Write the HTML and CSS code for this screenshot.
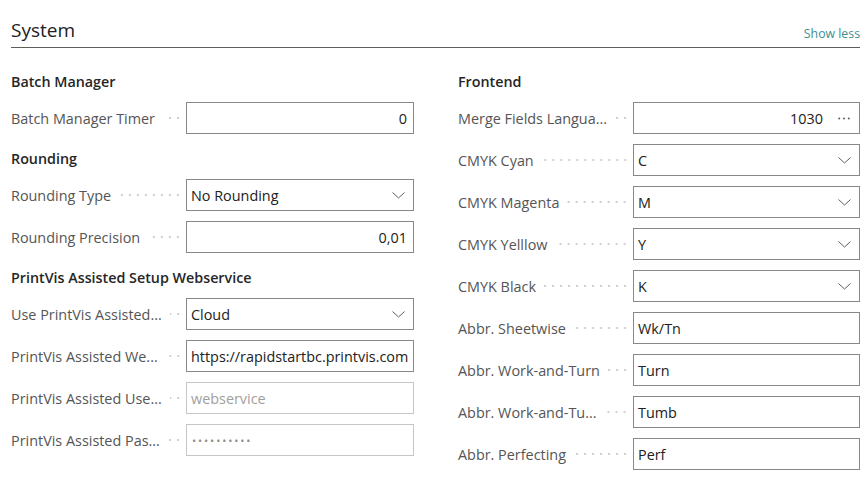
FILE: index.html
```html
<!DOCTYPE html>
<html lang="en">
<head>
<meta charset="utf-8">
<title>System</title>
<link rel="stylesheet" href="styles.css">
</head>
<body>
<div class="page">
  <div class="header">
    <h1 class="title">System</h1>
    <a class="show-less" href="#">Show less</a>
  </div>
  <div class="columns">
    <div class="col">
      <div class="group-title first">Batch Manager</div>
      <div class="field"><span class="label">Batch Manager Timer</span><span class="leader"></span><div class="box num"><span class="val">0</span></div></div>

      <div class="group-title">Rounding</div>
      <div class="field"><span class="label">Rounding Type</span><span class="leader"></span><div class="box select"><span class="val">No Rounding</span><svg class="chev" width="13" height="7" viewBox="0 0 13 7"><polyline points="0.5,0.5 6.5,6 12.5,0.5" fill="none" stroke="#605e5c" stroke-width="1"/></svg></div></div>
      <div class="field"><span class="label">Rounding Precision</span><span class="leader"></span><div class="box num"><span class="val">0,01</span></div></div>

      <div class="group-title">PrintVis Assisted Setup Webservice</div>
      <div class="field"><span class="label">Use PrintVis Assisted...</span><span class="leader"></span><div class="box select"><span class="val">Cloud</span><svg class="chev" width="13" height="7" viewBox="0 0 13 7"><polyline points="0.5,0.5 6.5,6 12.5,0.5" fill="none" stroke="#605e5c" stroke-width="1"/></svg></div></div>
      <div class="field"><span class="label">PrintVis Assisted We...</span><span class="leader"></span><div class="box"><span class="val">https://rapidstartbc.printvis.com</span></div></div>
      <div class="field"><span class="label">PrintVis Assisted Use...</span><span class="leader"></span><div class="box disabled"><span class="val">webservice</span></div></div>
      <div class="field"><span class="label">PrintVis Assisted Pas...</span><span class="leader"></span><div class="box disabled"><span class="val pw">••••••••••</span></div></div>
    </div>
    <div class="col">
      <div class="group-title first">Frontend</div>
      <div class="field"><span class="label">Merge Fields Langua...</span><span class="leader"></span><div class="box num lookup"><span class="val">1030</span><svg class="more" width="12" height="3" viewBox="0 0 12 3"><circle cx="1.2" cy="1.5" r="1" fill="#605e5c"/><circle cx="6" cy="1.5" r="1" fill="#605e5c"/><circle cx="10.8" cy="1.5" r="1" fill="#605e5c"/></svg></div></div>
      <div class="field"><span class="label">CMYK Cyan</span><span class="leader"></span><div class="box select"><span class="val">C</span><svg class="chev" width="13" height="7" viewBox="0 0 13 7"><polyline points="0.5,0.5 6.5,6 12.5,0.5" fill="none" stroke="#605e5c" stroke-width="1"/></svg></div></div>
      <div class="field"><span class="label">CMYK Magenta</span><span class="leader"></span><div class="box select"><span class="val">M</span><svg class="chev" width="13" height="7" viewBox="0 0 13 7"><polyline points="0.5,0.5 6.5,6 12.5,0.5" fill="none" stroke="#605e5c" stroke-width="1"/></svg></div></div>
      <div class="field"><span class="label">CMYK Yelllow</span><span class="leader"></span><div class="box select"><span class="val">Y</span><svg class="chev" width="13" height="7" viewBox="0 0 13 7"><polyline points="0.5,0.5 6.5,6 12.5,0.5" fill="none" stroke="#605e5c" stroke-width="1"/></svg></div></div>
      <div class="field"><span class="label">CMYK Black</span><span class="leader"></span><div class="box select"><span class="val">K</span><svg class="chev" width="13" height="7" viewBox="0 0 13 7"><polyline points="0.5,0.5 6.5,6 12.5,0.5" fill="none" stroke="#605e5c" stroke-width="1"/></svg></div></div>
      <div class="field"><span class="label">Abbr. Sheetwise</span><span class="leader"></span><div class="box"><span class="val">Wk/Tn</span></div></div>
      <div class="field"><span class="label">Abbr. Work-and-Turn</span><span class="leader"></span><div class="box"><span class="val">Turn</span></div></div>
      <div class="field"><span class="label">Abbr. Work-and-Tu...</span><span class="leader"></span><div class="box"><span class="val">Tumb</span></div></div>
      <div class="field"><span class="label">Abbr. Perfecting</span><span class="leader"></span><div class="box"><span class="val">Perf</span></div></div>
    </div>
  </div>
</div>
</body>
</html>
```
FILE: styles.css
```css
* { box-sizing: border-box; }
html, body { margin: 0; padding: 0; background: #ffffff; }
body {
  font-family: "Open Sans", "Noto Sans", "Liberation Sans", sans-serif;
  font-size: 14.4px;
  color: #212121;
}
.page {
  width: 866px;
  padding: 0 6px 0 11px;
}
.header {
  display: flex;
  justify-content: space-between;
  align-items: flex-end;
  height: 48px;
  border-bottom: 1px solid #605e5c;
  padding-bottom: 4px;
}
.title {
  margin: 0;
  font-size: 19px;
  font-weight: 400;
  line-height: 26px;
  color: #212121;
}
.show-less {
  font-size: 12.3px;
  line-height: 18px;
  color: #3d8f92;
  text-decoration: none;
}
.columns {
  display: grid;
  grid-template-columns: 403px 402px;
  column-gap: 44px;
}
.group-title {
  font-weight: 600;
  font-size: 14.3px;
  line-height: 20px;
  height: 20px;
  margin-top: 15px;
  margin-bottom: 10px;
  color: #262626;
}
.group-title.first { margin-top: 24px; }
.field {
  display: flex;
  align-items: center;
  height: 32px;
  margin-bottom: 10px;
}
.label {
  flex: none;
  color: #555555;
  white-space: nowrap;
}
.leader {
  flex: 1;
  height: 4px;
  margin: 0 4px 0 8px;
  background-image: radial-gradient(circle, #cfcfcf 1px, transparent 1.3px);
  background-size: 8px 4px;
  background-repeat: repeat-x;
  background-position: right center;
}
.box {
  flex: none;
  width: 228px;
  height: 32px;
  border: 1px solid #8a8886;
  display: flex;
  align-items: center;
  padding: 0 6px 0 4px;
  color: #212121;
  white-space: nowrap;
  overflow: hidden;
}
.col:last-child .box { width: 227px; }
.box .val { flex: 1; }
.box.num .val { text-align: right; }
.box.select { padding-right: 8px; }
.chev { flex: none; }
.box.lookup { padding-right: 9px; }
.more {
  flex: none;
  margin-left: 15px;
}
.box.disabled {
  border-color: #c8c6c4;
  color: #a19f9d;
}
.pw {
  font-size: 11px;
  letter-spacing: 1.9px;
  color: #8f8d8b;
  padding-left: 1px;
}
```
